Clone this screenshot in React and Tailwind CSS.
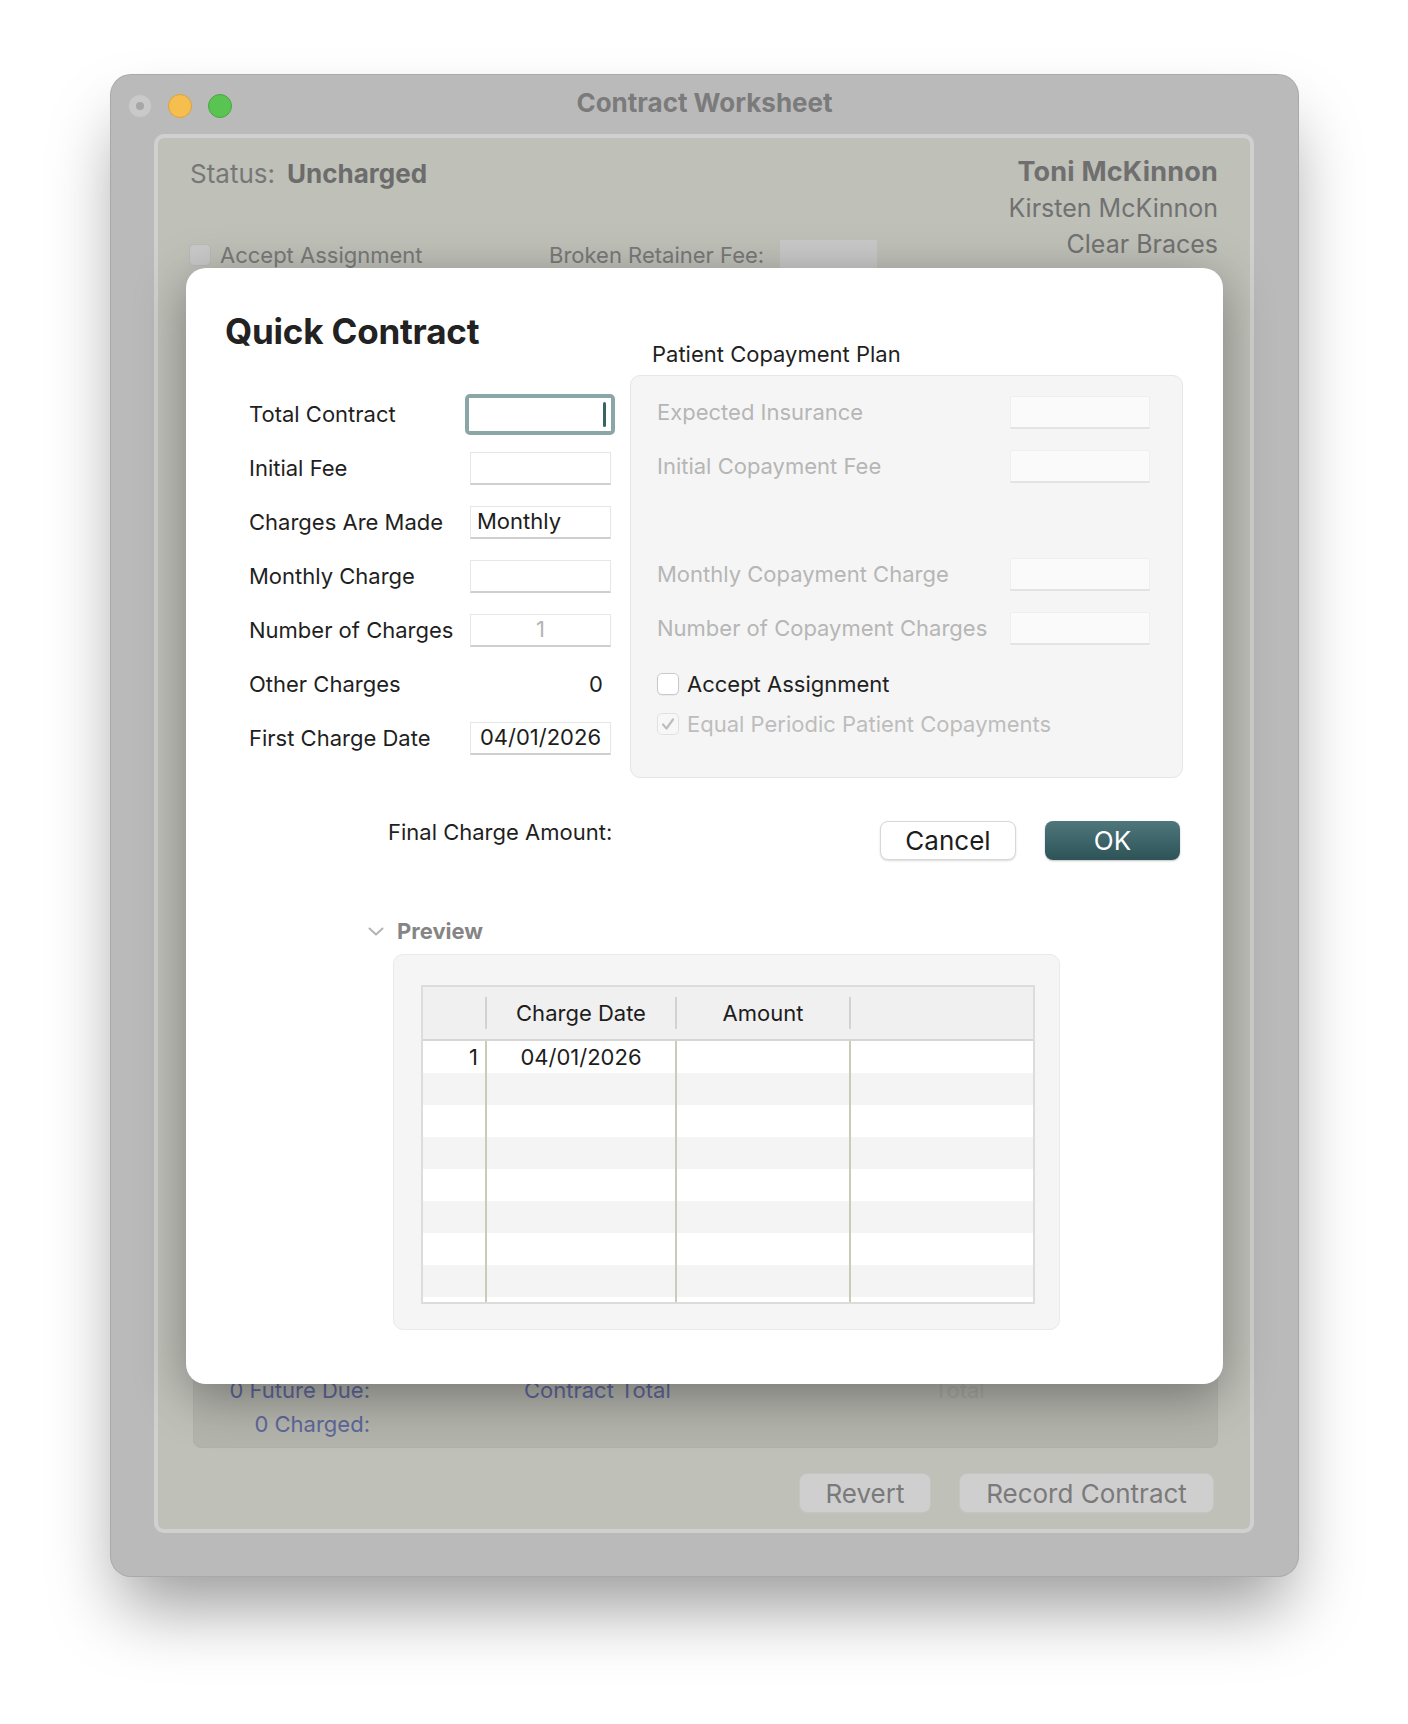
import React from 'react';

const leftRows = [
  { label: 'Total Contract', kind: 'focus' },
  { label: 'Initial Fee', kind: 'field', value: '' },
  { label: 'Charges Are Made', kind: 'field', value: 'Monthly', align: 'left' },
  { label: 'Monthly Charge', kind: 'field', value: '' },
  { label: 'Number of Charges', kind: 'field', value: '1', align: 'center', muted: true },
  { label: 'Other Charges', kind: 'plain', value: '0' },
  { label: 'First Charge Date', kind: 'field', value: '04/01/2026', align: 'center' },
];

function Field({ value, align, muted }) {
  let pos = 'justify-center';
  if (align === 'left') pos = 'justify-start pl-[6px]';
  return (
    <div
      className={`h-[33px] w-[141px] bg-white border border-[#e6e6e6] border-b-2 border-b-[#cfcfcf] flex items-center ${pos} ${
        muted ? 'text-[#b4b4b4]' : 'text-[#1d1d1d]'
      }`}
    >
      {value}
    </div>
  );
}

function GrayField() {
  return <div className="h-[33px] w-[140px] bg-[#fafafa] border border-[#efefef] border-b-2 border-b-[#e3e3e3]" />;
}

function Table() {
  const rows = [0, 1, 2, 3, 4, 5, 6, 7];
  return (
    <div className="w-[614px] h-[319px] border-2 border-[#dcdcdc] bg-white flex flex-col text-[22px] text-[#1d1d1d]">
      {/* header */}
      <div className="h-[54px] bg-[#f0f0f0] border-b-2 border-[#d6d6d6] flex items-center">
        <div className="w-[62px]" />
        <div className="w-[2px] h-[32px] bg-[#d2d2d2]" />
        <div className="w-[188px] text-center">Charge Date</div>
        <div className="w-[2px] h-[32px] bg-[#d2d2d2]" />
        <div className="w-[172px] text-center">Amount</div>
        <div className="w-[2px] h-[32px] bg-[#d2d2d2]" />
        <div className="flex-1" />
      </div>
      {rows.map((r) => (
        <div key={r} className={`h-[32px] flex ${r % 2 === 0 ? 'bg-white' : 'bg-[#f3f4f3]'}`}>
          <div className="w-[64px] border-r-2 border-[#cbcbbb] text-right pr-[7px] leading-[32px]">{r === 0 ? '1' : ''}</div>
          <div className="w-[190px] border-r-2 border-[#cbcbbb] text-center leading-[32px]">{r === 0 ? '04/01/2026' : ''}</div>
          <div className="w-[174px] border-r-2 border-[#cbcbbb]" />
          <div className="flex-1" />
        </div>
      ))}
      <div className="flex-1 flex bg-white">
        <div className="w-[64px] border-r-2 border-[#cbcbbb]" />
        <div className="w-[190px] border-r-2 border-[#cbcbbb]" />
        <div className="w-[174px] border-r-2 border-[#cbcbbb]" />
        <div className="flex-1" />
      </div>
    </div>
  );
}

function QuickContract() {
  return (
    <div className="absolute left-[75px] top-[193px] w-[1037px] h-[1116px] rounded-[20px] bg-white shadow-[0_12px_50px_rgba(0,0,0,0.35)] pt-[41px] pl-[39px] pr-[40px] text-[22px] text-[#1f1f1f]">
      <div className="flex">
        {/* Left column */}
        <div className="w-[405px]">
          <h1 className="h-[44px] leading-[44px] text-[35px] font-bold text-[#222] tracking-[-0.2px]">Quick Contract</h1>
          <div className="mt-[34px] pl-[24px]">
            {leftRows.map((row) => (
              <div key={row.label} className="h-[54px] flex items-center">
                <div className="w-[221px]">{row.label}</div>
                {row.kind === 'focus' && (
                  <div className="ml-[-5px] w-[150px] h-[41px] rounded-[5px] bg-[#8ba6a7] p-[4px]">
                    <div className="h-full bg-white flex items-center justify-end pr-[5px]">
                      <div className="w-[3px] h-[25px] rounded-full bg-[#3a6365]" />
                    </div>
                  </div>
                )}
                {row.kind === 'field' && <Field value={row.value} align={row.align} muted={row.muted} />}
                {row.kind === 'plain' && <div className="w-[141px] text-right pr-[8px]">{row.value}</div>}
              </div>
            ))}
          </div>
        </div>

        {/* Right column */}
        <div className="w-[553px]">
          <div className="mt-[30px] h-[30px] leading-[30px] pl-[22px]">Patient Copayment Plan</div>
          <div className="mt-[6px] h-[403px] rounded-[10px] border border-[#e6e6e6] bg-[#f5f5f5] pt-[9px] pl-[26px] pr-[32px] text-[#b6b6b6]">
            <div className="h-[54px] flex items-center justify-between">
              <span>Expected Insurance</span>
              <GrayField />
            </div>
            <div className="h-[54px] flex items-center justify-between">
              <span>Initial Copayment Fee</span>
              <GrayField />
            </div>
            <div className="h-[54px]" />
            <div className="h-[54px] flex items-center justify-between">
              <span>Monthly Copayment Charge</span>
              <GrayField />
            </div>
            <div className="h-[54px] flex items-center justify-between">
              <span>Number of Copayment Charges</span>
              <GrayField />
            </div>
            <div className="mt-[9px] h-[40px] flex items-center gap-[8px] text-[#1f1f1f]">
              <div className="w-[22px] h-[22px] rounded-[5px] border border-[#c9c9c9] bg-white shadow-[0_1px_1px_rgba(0,0,0,0.05)]" />
              <span>Accept Assignment</span>
            </div>
            <div className="h-[40px] flex items-center gap-[8px] text-[#bdbdbd]">
              <div className="w-[22px] h-[22px] rounded-[5px] border border-[#e1e1e1] bg-[#f7f7f7] flex items-center justify-center">
                <svg width="16" height="16" viewBox="0 0 16 16" fill="none">
                  <path d="M3 8.5 L6.5 12.5 L13 3.5" stroke="#bdbdbd" strokeWidth="2.2" strokeLinecap="round" strokeLinejoin="round" />
                </svg>
              </div>
              <span>Equal Periodic Patient Copayments</span>
            </div>
          </div>
        </div>
      </div>

      {/* Final charge + buttons */}
      <div className="mt-[39px] flex items-start">
        <div className="ml-[163px] h-[30px] leading-[30px]">Final Charge Amount:</div>
        <div className="ml-auto mr-[3px] mt-[4px] flex gap-[29px] text-[26px]">
          <button className="w-[136px] h-[39px] rounded-[8px] bg-white border border-[#d8d8d8] shadow-[0_1px_2px_rgba(0,0,0,0.15)] text-[#1d1d1d] leading-none">
            Cancel
          </button>
          <button className="w-[135px] h-[39px] rounded-[8px] bg-gradient-to-b from-[#4f777b] to-[#2d5357] text-white shadow-[0_1px_2px_rgba(0,0,0,0.25)] leading-none">
            OK
          </button>
        </div>
      </div>

      {/* Preview */}
      <div className="mt-[56px] h-[30px] flex items-center pl-[143px]">
        <svg width="16" height="9" viewBox="0 0 16 9" fill="none">
          <path d="M1.5 1.5 L8 7.5 L14.5 1.5" stroke="#b3b3b3" strokeWidth="2" strokeLinecap="round" strokeLinejoin="round" />
        </svg>
        <span className="ml-[13px] font-bold text-[#858585]">Preview</span>
      </div>
      <div className="mt-[8px] ml-[168px] w-[667px] h-[376px] rounded-[10px] border border-[#e9e9e9] bg-[#f5f5f5] pt-[30px] pl-[27px]">
        <Table />
      </div>
    </div>
  );
}

export default function App() {
  return (
    <div className="min-h-[1724px] w-[1408px] bg-white pt-[75px] pl-[111px] font-['Inter',sans-serif]">
      <div className="relative w-[1187px] h-[1501px] rounded-[20px] bg-[#bababa] shadow-[0_0_0_1px_#a9a9a9,0_40px_70px_-10px_rgba(0,0,0,0.4)]">
        {/* Title bar */}
        <div className="h-[59px] grid grid-cols-[1fr_auto_1fr] items-center">
          <div className="flex gap-[16px] pl-[17px] pt-[2px]">
            <div className="w-[24px] h-[24px] rounded-full bg-[#c9c9c9] border border-[#bcbcbc] flex items-center justify-center">
              <div className="w-[8px] h-[8px] rounded-full bg-[#a7a7a7]" />
            </div>
            <div className="w-[24px] h-[24px] rounded-full bg-[#f6be4f] border border-[#d9a33d]" />
            <div className="w-[24px] h-[24px] rounded-full bg-[#5ac452] border border-[#47a73f]" />
          </div>
          <div className="pb-[4px] text-[26px] font-bold text-[#7b7b7b]">Contract Worksheet</div>
          <div />
        </div>

        {/* Content panel */}
        <div className="ml-[43px] w-[1100px] h-[1399px] rounded-[10px] border-4 border-[#d0d0d0] bg-[#bfc0b8] flex flex-col">
          <div className="flex justify-between pl-[31px] pr-[32px]">
            <div className="pt-[17px]">
              <div className="ml-[1px] h-[36px] flex items-center text-[26px] text-[#777]">
                Status:
                <span className="ml-[12px] font-bold text-[#6c6c6c]">Uncharged</span>
              </div>
              <div className="mt-[46px] h-[36px] flex items-start text-[22px] text-[#797979]">
                <div className="w-[360px] h-[36px] flex items-center gap-[9px]">
                  <div className="w-[22px] h-[22px] rounded-[5px] bg-[#c9c9c9] border border-[#b9b9b9]" />
                  <span>Accept Assignment</span>
                </div>
                <span className="leading-[36px]">Broken Retainer Fee:</span>
                <div className="ml-[16px] mt-[3px] w-[97px] h-[30px] bg-[#c9c9c9]" />
              </div>
            </div>
            <div className="pt-[16px] text-right leading-[36px] text-[#717171]">
              <div className="text-[27px] font-bold text-[#6f6f6f] tracking-[0.2px]">Toni McKinnon</div>
              <div className="text-[25px]">Kirsten McKinnon</div>
              <div className="text-[25px]">Clear Braces</div>
            </div>
          </div>

          {/* Summary box (mostly hidden behind sheet) */}
          <div className="mt-auto ml-[35px] mr-[32px] h-[210px] rounded-[8px] bg-[#b3b4ac] border border-[#b0b1a9] flex flex-col justify-end pb-[6px] text-[22px] leading-[34px]">
            <div className="flex">
              <div className="w-[176px] text-right text-[#5d679b]">0 Future Due:</div>
              <div className="ml-[154px] w-[410px] text-[#5d679b]">Contract Total</div>
              <div className="text-[#a8a9a1]">Total</div>
            </div>
            <div className="flex">
              <div className="w-[176px] text-right text-[#5d679b]">0 Charged:</div>
            </div>
          </div>

          <div className="mt-[25px] mb-[16px] pr-[36px] flex justify-end gap-[28px] text-[26px] text-[#7a7a7a]">
            <div className="w-[132px] h-[40px] rounded-[8px] bg-[#cfcfcf] border border-[#c4c4c4] flex items-center justify-center">
              Revert
            </div>
            <div className="w-[255px] h-[40px] rounded-[8px] bg-[#cfcfcf] border border-[#c4c4c4] flex items-center justify-center">
              Record Contract
            </div>
          </div>
        </div>

        <QuickContract />
      </div>
    </div>
  );
}
